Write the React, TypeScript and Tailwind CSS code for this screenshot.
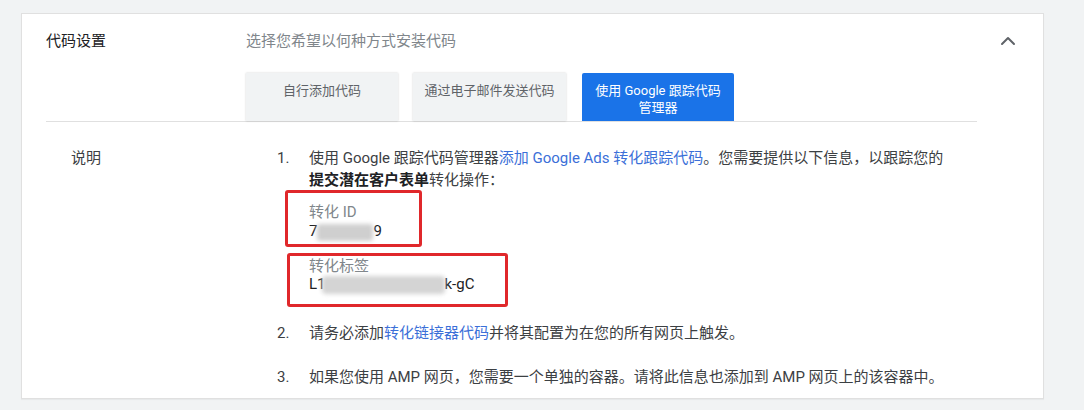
export default function App() {
  return (
    <div
      className="min-h-screen bg-[#f1f3f4] pt-[13px] pl-[21px]"
      style={{ fontFamily: "Roboto, 'Noto Sans CJK SC', sans-serif" }}
    >
      <div className="w-[1023px] h-[386px] bg-white border border-[#e0e0e0] shadow-[0_1px_1px_rgba(0,0,0,0.04)]">
        {/* Header */}
        <div className="pl-[24px] pr-[23px] pt-[16px]">
          <div className="flex items-center h-[22px]">
            <div className="w-[200px] text-[15px] text-[#202124]">代码设置</div>
            <div className="flex-1 text-[15px] text-[#80868b]">选择您希望以何种方式安装代码</div>
            <svg width="24" height="24" viewBox="0 0 24 24" fill="none" stroke="#5f6368" strokeWidth="2" strokeLinecap="round" strokeLinejoin="round">
              <path d="m18 15-6-6-6 6" />
            </svg>
          </div>

          {/* Tabs */}
          <div className="mt-[21px] ml-[200px] flex">
            <Tab label="自行添加代码" className="w-[152px]" />
            <Tab label="通过电子邮件发送代码" className="w-[153px] ml-[15px]" />
            <div className="w-[152px] ml-[16px] h-[48px] rounded-t-[2px] bg-[#1a73e8] pt-[9px] text-center text-[13px] leading-[17px] text-white">
              使用 Google 跟踪代码
              <br />
              管理器
            </div>
          </div>
          <div className="h-px bg-[#e0e0e0] mr-[43px]" />
        </div>

        {/* Explanation */}
        <div className="flex pl-[49px] pt-[25px] text-[15px] leading-[22px] text-[#3c4043]">
          <div className="w-[206px]">说明</div>
          <div className="flex-1">
            <div className="flex">
              <div className="w-[32px]">1.</div>
              <div>
                <p className="whitespace-nowrap">
                  使用 Google 跟踪代码管理器
                  <span className="text-[#3b6fd8]">添加 Google Ads 转化跟踪代码</span>
                  。您需要提供以下信息，以跟踪您的
                  <br />
                  <b className="font-bold text-[#202124]">提交潜在客户表单</b>
                  转化操作：
                </p>

                <div className="mt-[-1px] ml-[-24px] w-[137px] h-[57px] rounded-[3px] border-[3px] border-[#e0282b] pl-[21px] pt-[9px]">
                  <div className="leading-[20px] text-[#80868b]">转化 ID</div>
                  <div className="leading-[18px] text-[#202124]">
                    7
                    <span className="inline-block align-middle w-[56px] h-[17px] rounded-[3px] bg-[#cfcfcf] blur-[2px]" />
                    9
                  </div>
                </div>

                <div className="mt-[6px] ml-[-22px] w-[221px] h-[54px] rounded-[3px] border-[3px] border-[#e0282b] pl-[19px] pt-[2px]">
                  <div className="leading-[16px] text-[#80868b]">转化标签</div>
                  <div className="leading-[20px] text-[#202124]">
                    L1
                    <span className="inline-block align-middle ml-[-4px] w-[123px] h-[18px] rounded-[4px] bg-[#d4d4d4] blur-[2px]" />
                    k-gC
                  </div>
                </div>
              </div>
            </div>

            <div className="flex mt-[15px]">
              <div className="w-[32px]">2.</div>
              <p className="whitespace-nowrap">
                请务必添加<span className="text-[#3b6fd8]">转化链接器代码</span>并将其配置为在您的所有网页上触发。
              </p>
            </div>

            <div className="flex mt-[22px]">
              <div className="w-[32px]">3.</div>
              <p className="whitespace-nowrap">
                如果您使用 AMP 网页，您需要一个单独的容器。请将此信息也添加到 AMP 网页上的该容器中。
              </p>
            </div>
          </div>
        </div>
      </div>
    </div>
  );
}

function Tab({ label, className }: { label: string; className: string }) {
  return (
    <div
      className={`h-[48px] bg-[#f1f3f4] pt-[9px] text-center text-[13px] leading-[17px] text-[#5f6368] shadow-[0_0_2px_rgba(0,0,0,0.18)] ${className}`}
    >
      {label}
    </div>
  );
}
